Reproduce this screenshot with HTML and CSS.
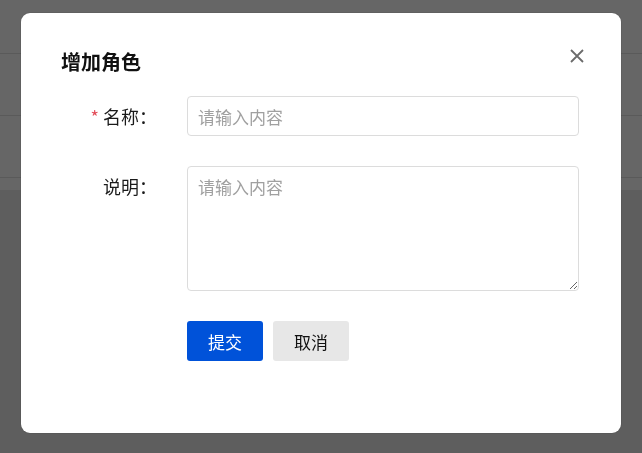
FILE: index.html
```html
<!DOCTYPE html>
<html lang="zh-CN">
<head>
  <meta charset="UTF-8" />
  <title>角色管理</title>
  <link rel="stylesheet" href="styles.css">
</head>
<body>

  <!-- underliggende side (tabel) -->
  <div class="page">
    <div class="table">
      <div class="tr tr-head"></div>
      <div class="tr"></div>
      <div class="tr"></div>
    </div>
  </div>

  <div class="mask">
    <div class="dialog">
      <button class="close" type="button" aria-label="关闭">
        <svg width="14" height="14" viewBox="0 0 14 14">
          <path d="M1 1 L13 13 M13 1 L1 13" stroke="currentColor" stroke-width="1.8" fill="none" />
        </svg>
      </button>

      <h3 class="title">增加角色</h3>

      <form class="form">
        <div class="form-item">
          <label class="label"><span class="req">*</span>名称：</label>
          <input class="input" type="text" placeholder="请输入内容" />
        </div>

        <div class="form-item">
          <label class="label">说明：</label>
          <textarea class="textarea" placeholder="请输入内容"></textarea>
        </div>

        <div class="form-item">
          <div class="label"></div>
          <div class="actions">
            <button class="btn btn-primary" type="button">提交</button>
            <button class="btn btn-default" type="button">取消</button>
          </div>
        </div>
      </form>
    </div>
  </div>

</body>
</html>
```

FILE: styles.css
```css
:root {
  --blaa: #0052d9;
  --graa-kant: #dcdcdc;
  --tekst: #1a1a1a;
}

* {
  box-sizing: border-box;
}

body {
  margin: 0;
  font-family: "Noto Sans CJK SC", "Noto Sans", sans-serif;
  color: var(--tekst);
  background-color: #ececec;
  min-height: 100vh;
}

.page {
  background-color: #ffffff;
  padding-bottom: 12px;
}

.tr {
  height: 62px;
  border-bottom: 1px solid #e2e2e2;
}

.tr-head {
  height: 54px;
}

.mask {
  position: fixed;
  top: 0;
  left: 0;
  right: 0;
  bottom: 0;
  background-color: rgba(0, 0, 0, 0.6);
  display: flex;
  justify-content: center;
  align-items: flex-start;
  padding-top: 13px;
}

.dialog {
  position: relative;
  width: 600px;
  height: 420px;
  background-color: #ffffff;
  border-radius: 9px;
  box-shadow: 0 0 0 1px rgba(0, 0, 0, 0.06);
  padding: 35px 40px;
}

.close {
  position: absolute;
  top: 36px;
  right: 37px;
  width: 14px;
  height: 14px;
  padding: 0;
  border: none;
  background: none;
  color: #6b6b6b;
  cursor: pointer;
  display: flex;
}

.title {
  margin: 0 0 20px;
  font-size: 20px;
  line-height: 28px;
  font-weight: bold;
  color: #111;
}

.form-item {
  display: flex;
  margin-bottom: 30px;
}

.label {
  width: 126px;
  height: 40px;
  flex-shrink: 0;
  padding-right: 30px;
  text-align: right;
  font-size: 18px;
  line-height: 40px;
}

.req {
  color: #e34d59;
  margin-right: 4px;
}

.input,
.textarea {
  width: 392px;
  border: 1px solid var(--graa-kant);
  border-radius: 4px;
  font-family: inherit;
  font-size: 17px;
  color: var(--tekst);
  outline: none;
}

.input {
  height: 40px;
  padding: 0 10px;
}

.textarea {
  height: 125px;
  padding: 8px 10px;
  line-height: 24px;
  resize: vertical;
}

.input::placeholder,
.textarea::placeholder {
  color: #a0a0a0;
}

.actions {
  display: flex;
  gap: 10px;
}

.btn {
  width: 76px;
  height: 40px;
  border: none;
  border-radius: 3px;
  font-family: inherit;
  font-size: 17px;
  cursor: pointer;
}

.btn-primary {
  background-color: var(--blaa);
  color: #ffffff;
}

.btn-default {
  background-color: #e7e7e7;
  color: #111;
}
```
